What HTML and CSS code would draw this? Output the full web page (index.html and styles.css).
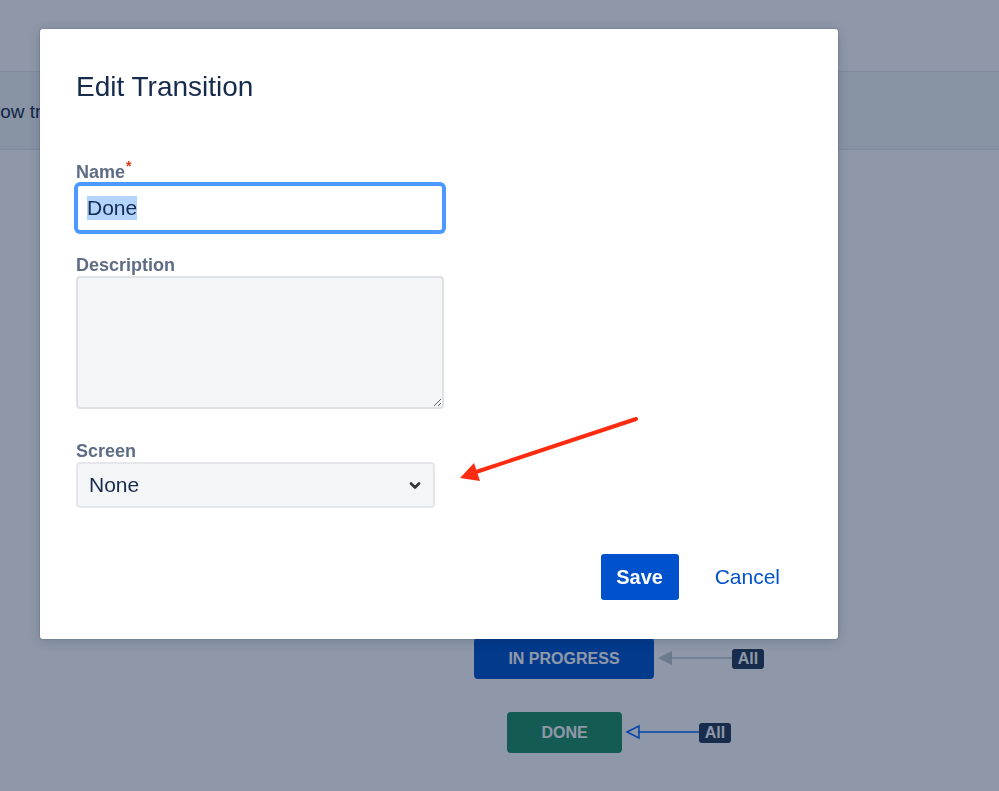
FILE: index.html
```html
<!DOCTYPE html>
<html lang="en">
<head>
    <meta charset="UTF-8">
    <meta name="viewport" content="width=device-width, initial-scale=1.0">
    <title>Edit Transition</title>
    <link rel="stylesheet" href="styles.css">
</head>
<body>
    <div class="page">
        <div class="topbar"></div>
        <div class="toolbar">
            <span class="toolbar-label">Show transition labels</span>
        </div>
        <div class="diagram">
            <svg class="links" width="999" height="641" viewBox="0 0 999 641">
                <line x1="670" y1="508" x2="732" y2="508" stroke="#c1c7d0" stroke-width="1.5"/>
                <polygon points="658,508 672,501 672,515" fill="#c1c7d0"/>
                <line x1="638" y1="582" x2="699" y2="582" stroke="#0065ff" stroke-width="1.5"/>
                <polygon points="627,582 639,576 639,588" fill="none" stroke="#0065ff" stroke-width="1.5"/>
            </svg>
            <div class="status status-progress">IN PROGRESS</div>
            <div class="status status-done">DONE</div>
            <div class="all-badge badge-progress">All</div>
            <div class="all-badge badge-done">All</div>
        </div>
    </div>

    <div class="blanket"></div>

    <div class="modal">
        <h2 class="modal-title">Edit Transition</h2>

        <div class="field field-name">
            <label class="field-label">Name<span class="required">*</span></label>
            <div class="text-input is-focused"><span class="selected">Done</span></div>
        </div>

        <div class="field field-desc">
            <label class="field-label">Description</label>
            <textarea class="textarea"></textarea>
        </div>

        <div class="field field-screen">
            <label class="field-label">Screen</label>
            <div class="select">
                <span>None</span>
                <svg class="chevron" width="12" height="8" viewBox="0 0 12 8">
                    <path d="M2 1.5 L6 5.5 L10 1.5" fill="none" stroke="#333" stroke-width="2.6" stroke-linecap="round" stroke-linejoin="round"/>
                </svg>
            </div>
        </div>

        <div class="modal-footer">
            <button class="btn btn-primary">Save</button>
            <button class="btn btn-link">Cancel</button>
        </div>
    </div>

    <!-- annotation added on the screenshot -->
    <svg class="annotation" width="999" height="791" viewBox="0 0 999 791">
        <line x1="636" y1="419" x2="476" y2="472" stroke="#fd2b10" stroke-width="4" stroke-linecap="round"/>
        <polygon points="460,478 474,463 480,481" fill="#fd2b10"/>
    </svg>
</body>
</html>
```

FILE: styles.css
```css
body {
    margin: 0;
    height: 791px;
    overflow: hidden;
    font-family: 'Liberation Sans', Arial, sans-serif;
    color: #172b4d;
    background: #fff;
}

.page {
    display: flex;
    flex-direction: column;
    height: 791px;
}

.topbar {
    height: 71px;
    background: #fff;
}

.toolbar {
    height: 77px;
    display: flex;
    align-items: center;
    background: #f4f5f7;
    border-top: 1px solid #e6e8ec;
    border-bottom: 1px solid #e6e8ec;
    overflow: hidden;
}

.toolbar-label {
    font-size: 19px;
    margin-left: -23px;
    white-space: nowrap;
    padding-top: 3px;
}

.diagram {
    position: relative;
    flex: 1;
    background: #fff;
}

.links {
    position: absolute;
    left: 0;
    top: 0;
}

.status {
    position: absolute;
    display: flex;
    align-items: center;
    justify-content: center;
    height: 41px;
    border-radius: 4px;
    color: #fff;
    font-weight: bold;
    font-size: 16px;
}

.status-progress {
    left: 474px;
    top: 488px;
    width: 180px;
    background: #0052cc;
}

.status-done {
    left: 507px;
    top: 562px;
    width: 115px;
    background: #1f8f62;
}

.all-badge {
    position: absolute;
    width: 32px;
    height: 20px;
    line-height: 20px;
    text-align: center;
    border-radius: 3px;
    background: #253858;
    color: #fff;
    font-weight: bold;
    font-size: 16px;
}

.badge-progress {
    left: 732px;
    top: 499px;
}

.badge-done {
    left: 699px;
    top: 573px;
}

.blanket {
    position: fixed;
    inset: 0;
    background: rgba(9, 30, 66, 0.46);
}

.modal {
    position: absolute;
    left: 40px;
    top: 29px;
    width: 798px;
    box-sizing: border-box;
    padding: 42px 44px 39px 36px;
    background: #fff;
    border-radius: 3px;
    box-shadow: 0 0 0 1px rgba(9, 30, 66, 0.08), 0 2px 12px rgba(9, 30, 66, 0.2);
}

.modal-title {
    margin: 0;
    font-size: 28px;
    line-height: 32px;
    font-weight: normal;
    color: #172b4d;
}

.field-name {
    margin-top: 59px;
}

.field-desc {
    margin-top: 23px;
}

.field-screen {
    margin-top: 32px;
}

.field-label {
    display: block;
    margin-bottom: 1px;
    font-size: 18px;
    line-height: 20px;
    font-weight: bold;
    color: #5e6c84;
}

.required {
    position: relative;
    top: -7px;
    margin-left: 1px;
    font-size: 14px;
    color: #de350b;
}

.text-input {
    display: flex;
    align-items: center;
    box-sizing: border-box;
    width: 368px;
    height: 48px;
    padding-left: 9px;
    border: 2px solid #dfe1e6;
    border-radius: 4px;
    background: #fff;
    font-size: 21px;
    color: #172b4d;
}

.text-input.is-focused {
    border-color: #4c9aff;
    box-shadow: 0 0 0 2px #4c9aff;
}

.selected {
    background: #b3d4ff;
}

.textarea {
    display: block;
    box-sizing: border-box;
    width: 368px;
    height: 133px;
    margin: 0;
    border: 2px solid #dfe1e6;
    border-radius: 4px;
    background: #f4f5f7;
    font-family: inherit;
    font-size: 18px;
    outline: none;
}

.select {
    display: flex;
    align-items: center;
    justify-content: space-between;
    box-sizing: border-box;
    width: 359px;
    height: 46px;
    padding: 0 12px 0 11px;
    border: 2px solid #e4e6ea;
    border-radius: 4px;
    background: #f4f5f7;
    font-size: 21px;
    color: #172b4d;
}

.chevron {
    margin-top: 2px;
}

.modal-footer {
    display: flex;
    justify-content: flex-end;
    gap: 22px;
    margin-top: 46px;
}

.btn {
    height: 46px;
    border: none;
    border-radius: 3px;
    font-family: inherit;
    cursor: pointer;
}

.btn-primary {
    width: 78px;
    background: #0052cc;
    color: #fff;
    font-size: 20px;
    font-weight: bold;
}

.btn-link {
    padding: 0 14px;
    background: transparent;
    color: #0052cc;
    font-size: 21px;
}

.annotation {
    position: absolute;
    left: 0;
    top: 0;
    pointer-events: none;
}
```
